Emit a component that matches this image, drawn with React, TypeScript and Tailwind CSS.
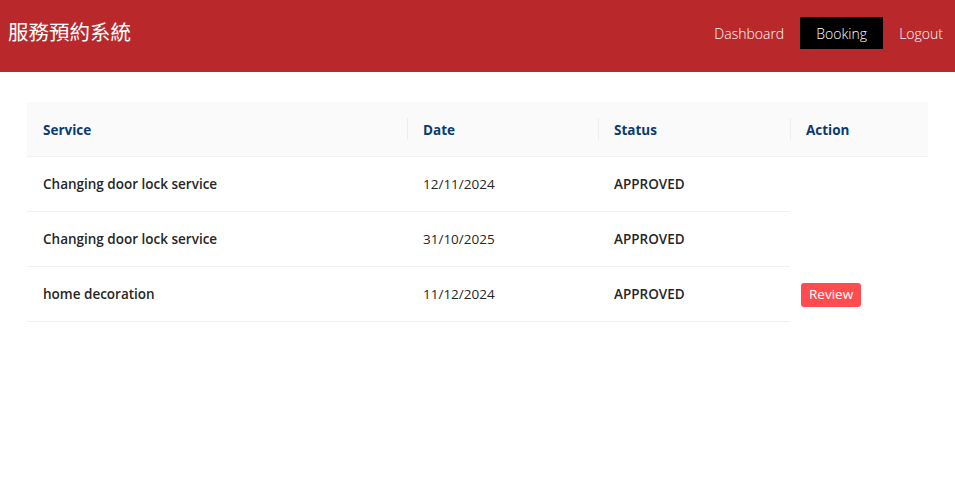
import React from 'react';

interface Booking {
  service: string;
  date: string;
  status: string;
  canReview: boolean;
}

const bookings: Booking[] = [
  { service: 'Changing door lock service', date: '12/11/2024', status: 'APPROVED', canReview: false },
  { service: 'Changing door lock service', date: '31/10/2025', status: 'APPROVED', canReview: false },
  { service: 'home decoration', date: '11/12/2024', status: 'APPROVED', canReview: true },
];

const font = { fontFamily: '"Open Sans", "Noto Sans CJK TC", sans-serif' };

export default function App() {
  return (
    <div className="min-h-[493px] bg-white" style={font}>
      {/* Header */}
      <header className="flex h-[72px] items-center justify-between bg-[#b9292b] pb-[6px] pl-2 pr-3">
        <h1 className="-mt-[3px] text-[20.5px] font-normal text-white" style={{ fontFamily: '"Noto Sans CJK TC", sans-serif' }}>
          服務預約系統
        </h1>
        <nav className="flex items-center gap-4 text-[14px] font-light text-white">
          <a>Dashboard</a>
          <a className="flex h-8 w-[83px] items-center justify-center bg-black">Booking</a>
          <a>Logout</a>
        </nav>
      </header>

      {/* Table */}
      <div className="px-[27px] pt-[30px]">
        <table className="w-full border-collapse text-[13.5px] text-[#262626]">
          <thead>
            <tr className="h-[54px] bg-[#fafafa] text-left text-[#0b3b6e]">
              <th className="relative w-[380px] border-b border-[#f0f0f0] px-4 pt-[2px] font-bold">Service</th>
              <th className="relative w-[191px] border-b border-[#f0f0f0] px-4 pt-[2px] font-bold">
                <span className="absolute left-0 top-1/2 h-[22px] w-px -translate-y-1/2 bg-[#ededed]" />
                Date
              </th>
              <th className="relative w-[192px] border-b border-[#f0f0f0] px-4 pt-[2px] font-bold">
                <span className="absolute left-0 top-1/2 h-[22px] w-px -translate-y-1/2 bg-[#ededed]" />
                Status
              </th>
              <th className="relative border-b border-[#f0f0f0] px-4 pt-[2px] font-bold">
                <span className="absolute left-0 top-1/2 h-[22px] w-px -translate-y-1/2 bg-[#ededed]" />
                Action
              </th>
            </tr>
          </thead>
          <tbody>
            {bookings.map((b, i) => (
              <tr key={i} className="h-[55px]">
                <td className="border-b border-[#f0f0f0] px-4 pt-[2px] font-semibold">{b.service}</td>
                <td className="border-b border-[#f0f0f0] px-4 pt-[2px]">{b.date}</td>
                <td className="border-b border-[#f0f0f0] px-4 pt-[2px] font-semibold">{b.status}</td>
                <td className="px-[11px] pt-[2px]">
                  {b.canReview && (
                    <button className="h-6 rounded-[3px] bg-[#ff4d4f] px-2 text-[13.5px] text-white">Review</button>
                  )}
                </td>
              </tr>
            ))}
          </tbody>
        </table>
      </div>
    </div>
  );
}
